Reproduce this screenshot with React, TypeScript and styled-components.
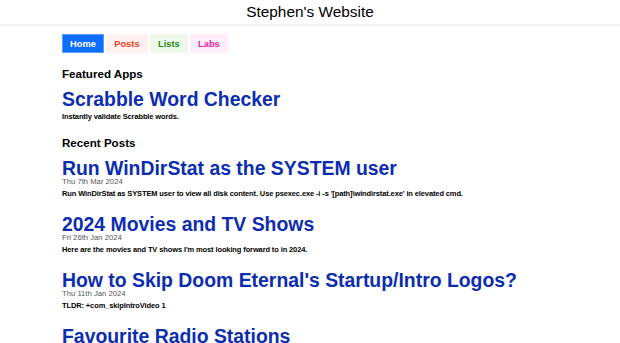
import React from "react";
import styled, { createGlobalStyle } from "styled-components";

const Global = createGlobalStyle`
  html, body { margin: 0; padding: 0; background: #fff; }
  body { font-family: "Liberation Sans", Arial, sans-serif; color: #000; }
  * { box-sizing: border-box; }
`;

const Header = styled.header`
  height: 26px;
  display: flex;
  align-items: center;
  justify-content: center;
  border-bottom: 2px solid #f2f2f2;
`;

const SiteTitle = styled.h1`
  margin: 0;
  font-size: 15.4px;
  font-weight: 400;
  line-height: 18px;
`;

const Main = styled.main`
  padding: 8px 62px 0;
  display: flex;
  flex-direction: column;
`;

const Nav = styled.nav`
  display: flex;
  gap: 2.4px;
`;

const tabColors: Record<string, { bg: string; fg: string }> = {
  home: { bg: "#0d6efd", fg: "#ffffff" },
  posts: { bg: "#fff1ef", fg: "#e8401c" },
  lists: { bg: "#eef8ea", fg: "#1f8a12" },
  labs: { bg: "#ffeefa", fg: "#e51fae" },
};

const Tab = styled.a<{ $kind: string }>`
  display: flex;
  align-items: center;
  justify-content: center;
  height: 19px;
  padding: 0 8px;
  font-size: 9.3px;
  font-weight: 700;
  text-decoration: none;
  border-radius: 1px;
  background: ${(p) => tabColors[p.$kind].bg};
  color: ${(p) => tabColors[p.$kind].fg};
  ${(p) => (p.$kind === "home" ? "box-shadow: inset 0 0 0 1px #5a9cff;" : "")}
`;

const SectionTitle = styled.h2`
  margin: 14px 0 0;
  font-size: 11.6px;
  font-weight: 700;
  line-height: 14px;
`;

const Item = styled.article`
  display: flex;
  flex-direction: column;
`;

const ItemTitle = styled.a`
  display: block;
  color: #0c2db0;
  font-size: 19.4px;
  font-weight: 700;
  line-height: 20px;
  text-decoration: none;
`;

const ItemDate = styled.div`
  color: #555;
  font-size: 7.7px;
  line-height: 8px;
`;

const ItemDesc = styled.p`
  margin: 3px 0 0;
  font-size: 7.5px;
  font-weight: 700;
  line-height: 10px;
  letter-spacing: -0.12px;
`;

const Featured = styled(Item)`
  margin-top: 7.5px;
`;

const PostList = styled.div`
  margin-top: 8px;
  display: flex;
  flex-direction: column;
  gap: 15px;
`;

const posts = [
  {
    title: "Run WinDirStat as the SYSTEM user",
    date: "Thu 7th Mar 2024",
    desc: "Run WinDirStat as SYSTEM user to view all disk content. Use psexec.exe -i -s '[path]\\windirstat.exe' in elevated cmd.",
  },
  {
    title: "2024 Movies and TV Shows",
    date: "Fri 26th Jan 2024",
    desc: "Here are the movies and TV shows I'm most looking forward to in 2024.",
  },
  {
    title: "How to Skip Doom Eternal's Startup/Intro Logos?",
    date: "Thu 11th Jan 2024",
    desc: "TLDR: +com_skipIntroVideo 1",
  },
  {
    title: "Favourite Radio Stations",
    date: "",
    desc: "",
  },
];

export default function App() {
  return (
    <>
      <Global />
      <Header>
        <SiteTitle>Stephen's Website</SiteTitle>
      </Header>
      <Main>
        <Nav>
          <Tab $kind="home" href="#">Home</Tab>
          <Tab $kind="posts" href="#">Posts</Tab>
          <Tab $kind="lists" href="#">Lists</Tab>
          <Tab $kind="labs" href="#">Labs</Tab>
        </Nav>
        <SectionTitle>Featured Apps</SectionTitle>
        <Featured>
          <ItemTitle href="#">Scrabble Word Checker</ItemTitle>
          <ItemDesc>Instantly validate Scrabble words.</ItemDesc>
        </Featured>
        <SectionTitle>Recent Posts</SectionTitle>
        <PostList>
          {posts.map((p) => (
            <Item key={p.title}>
              <ItemTitle href="#">{p.title}</ItemTitle>
              {p.date && <ItemDate>{p.date}</ItemDate>}
              {p.desc && <ItemDesc>{p.desc}</ItemDesc>}
            </Item>
          ))}
        </PostList>
      </Main>
    </>
  );
}
